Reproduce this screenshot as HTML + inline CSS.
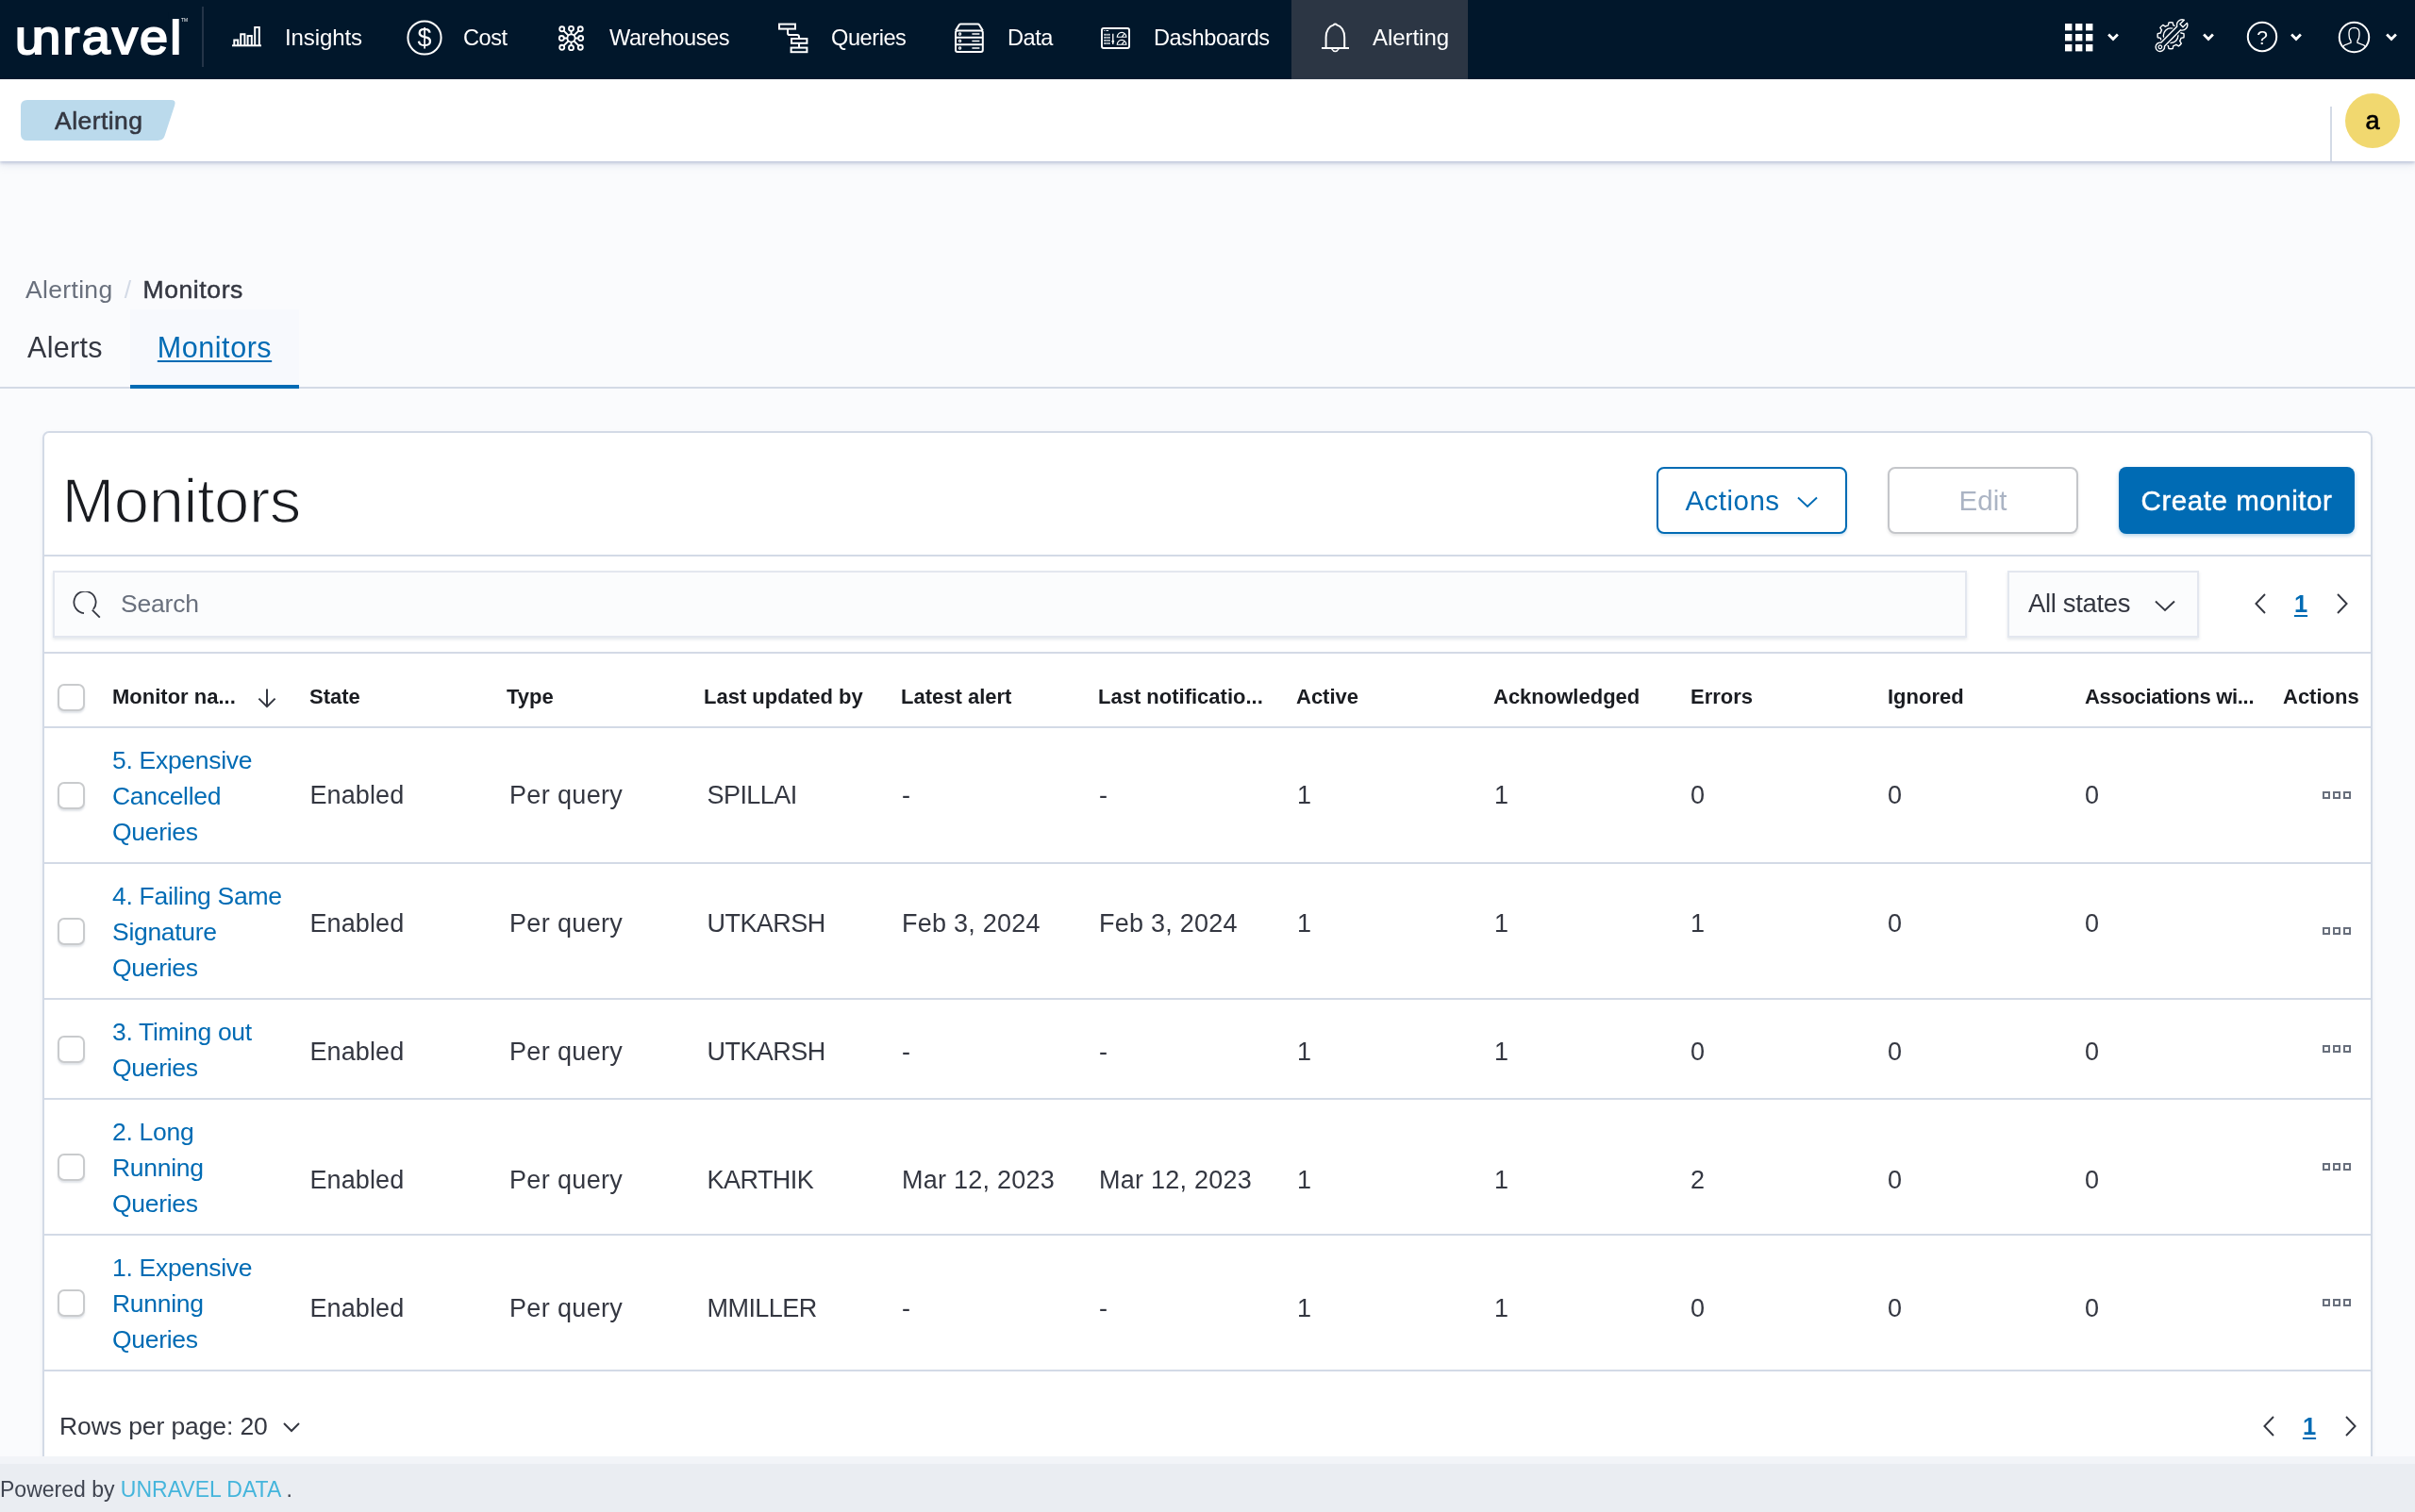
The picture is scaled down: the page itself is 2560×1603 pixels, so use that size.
<!DOCTYPE html>
<html lang="en">
<head>
<meta charset="utf-8">
<title>Unravel - Alerting - Monitors</title>
<style>
*{box-sizing:border-box;margin:0;padding:0}
html,body{width:2560px;height:1603px;overflow:hidden;background:#fafbfd;font-family:"Liberation Sans",sans-serif;color:#343741}
a{text-decoration:none;color:inherit}
.abs{position:absolute}
#app{will-change:transform;position:relative;width:2560px;height:1603px;overflow:hidden;background:#fafbfd}

/* top nav */
#nav{position:absolute;left:0;top:0;width:2560px;height:84px;background:#01172b;color:#fff}
#logo{position:absolute;left:16.2px;top:4.7px;font-size:51.5px;line-height:68px;font-weight:400;letter-spacing:2.1px;color:#fff;-webkit-text-stroke:1.9px #fff;transform:scaleX(1.048);transform-origin:0 0;white-space:nowrap}
#logo::first-letter{margin-right:-13.3px}
#logo i{position:absolute;left:155px;top:8px;width:14px;height:7.6px;background:#01172b}
#logo sup{position:absolute;left:168px;top:14px;font-size:4.6px;line-height:5px;letter-spacing:0;font-weight:400;-webkit-text-stroke:0}
#nav .sep{position:absolute;left:214px;top:7px;width:2px;height:64px;background:#243447}
.ni{position:absolute;top:0;height:84px}
.ni.active{background:#2c3644}
.ni span{position:absolute;top:25px;font-size:23.6px;line-height:30px;white-space:nowrap;color:#fff;letter-spacing:-.45px}
.ni svg{position:absolute;overflow:visible}
.ico{fill:none;stroke:#fff;stroke-width:2}
.chev{position:absolute;top:34px;width:16px;height:12px}

/* sub header */
#sub{position:absolute;left:0;top:84px;width:2560px;height:87px;background:#fff;box-shadow:0 2px 3px rgba(150,162,195,.5),0 5px 8px rgba(152,162,190,.16)}
#chip{position:absolute;left:22px;top:22px;width:165px;height:43px}
#chip span{position:absolute;left:36px;top:5.5px;font-size:26.5px;line-height:32px;color:#343741;letter-spacing:.45px;-webkit-text-stroke:.55px #343741}
#sub .vsep{position:absolute;left:2470px;top:29px;width:2px;height:58px;background:#d3dae6}
#avatar{position:absolute;left:2486px;top:15px;width:58px;height:58px;border-radius:50%;background:#f1d86f;color:#000;font-size:27px;line-height:58.5px;text-align:center;-webkit-text-stroke:.6px #000}

/* breadcrumbs + tabs */
#crumbs{position:absolute;left:27px;top:290px;font-size:26.5px;line-height:34px;white-space:nowrap;color:#69707d;letter-spacing:.33px}
#crumbs .slash{display:inline-block;width:32px;text-align:center;color:#d3dae6}
#crumbs b{font-weight:400;color:#343741;-webkit-text-stroke:.5px #343741;letter-spacing:.6px}
#tabs{position:absolute;left:0;top:328px;width:2560px;height:84px;border-bottom:2px solid #d3dae6}
#tabs .tab{position:absolute;top:0;height:84px;font-size:30.5px;line-height:40px;padding-top:20px;color:#343741;letter-spacing:.3px}
#tabs .tab.sel{left:138px;width:179px;background:#f7f9fd;color:#006bb4;border-bottom:4px solid #006bb4;height:84px;text-align:center}
#tabs .tab.sel span{text-decoration:underline;text-decoration-thickness:2px;text-underline-offset:2.5px;letter-spacing:.55px}

/* panel */
#panel{position:absolute;left:45px;top:457px;width:2470px;height:1120px;background:#fff;border:2px solid #d3dae6;border-radius:7px;box-shadow:0 2px 4px rgba(152,162,179,.15)}
.hl{position:absolute;left:0;width:2466px;height:2px;background:#d3dae6}


/* panel content (page coordinates) */
#pc{position:absolute;left:0;top:0;width:2560px;height:1544px;overflow:hidden}
#pc .hl{left:47px}
#ttl{position:absolute;left:65.5px;top:491px;font-size:67px;line-height:80px;font-weight:400;letter-spacing:-.45px;color:#1a1c21;-webkit-text-stroke:1.5px #fff;white-space:nowrap}
.btn{position:absolute;top:495px;height:71px;border-radius:8px;font-size:29.5px;line-height:36px;white-space:nowrap;display:flex;align-items:center;justify-content:center}
.b-act{border:2px solid #006bb4;color:#006bb4;background:#fff;box-shadow:0 2px 3px rgba(0,107,180,.18)}
.b-act span{letter-spacing:.5px}
.b-act svg{margin-left:17px;margin-top:3px}
.b-edit{border:2px solid #c4c6ca;color:#abb4c4;background:#fff;box-shadow:0 2px 3px rgba(100,100,100,.15)}
.b-create{background:#006bb4;color:#fff;box-shadow:0 2px 4px rgba(0,107,180,.3)}
.b-create span{-webkit-text-stroke:.5px #fff;letter-spacing:.55px}
#search{position:absolute;left:56px;top:605px;width:2029px;height:71px;background:#fbfcfd;border:2px solid #e3e7ef;box-shadow:0 2px 3px rgba(152,162,179,.25)}
#search svg{position:absolute;left:18px;top:20px}
#search span{position:absolute;left:70px;top:16px;font-size:26.5px;line-height:34px;color:#69707d;letter-spacing:-.2px}
#states{position:absolute;left:2128px;top:605px;width:203px;height:71px;background:#fbfcfd;border:2px solid #e3e7ef;box-shadow:0 2px 3px rgba(152,162,179,.25)}
#states span{position:absolute;left:20px;top:16px;font-size:27.5px;line-height:34px;color:#343741;white-space:nowrap;letter-spacing:-.35px}
#states svg{position:absolute;left:152.5px;top:28px}
.pag{position:absolute;left:2389px;width:102px;height:24px}
.pag svg{position:absolute;top:0}
.pag b{position:absolute;left:37px;top:-5px;width:26px;text-align:center;font-size:25.5px;line-height:34px;color:#006bb4;text-decoration:underline;text-decoration-thickness:2px;text-underline-offset:3px}
#pg2{left:2398px}
.cb{position:absolute;left:61px;width:29px;height:29px;border:2px solid #c9cbcd;border-radius:7px;background:#fff;box-shadow:0 2px 2px rgba(152,162,179,.3)}
.th{position:absolute;top:722.3px;font-size:22px;line-height:34px;font-weight:700;color:#1a1c21;white-space:nowrap}
.nm{position:absolute;left:119px;font-size:26.5px;line-height:38px;color:#006bb4;white-space:nowrap;letter-spacing:-.3px}
.td{position:absolute;font-size:27px;line-height:38px;color:#343741;white-space:nowrap}
.dots{position:absolute;left:2462px;width:30px;height:8px}
.dots i{position:absolute;top:0;width:8px;height:8px;border:2px solid #69707d}
.dots i:nth-child(2){left:11px}.dots i:nth-child(3){left:22px}
#rpp{position:absolute;left:63px;top:1495px;font-size:26.5px;line-height:34px;color:#343741;white-space:nowrap;letter-spacing:-.1px}
#rpp svg{margin-left:15px;position:relative;top:-2px}

/* footer */
#footer{position:absolute;left:0;top:1544px;width:2560px;height:59px;background:#eaedf2;border-top:8px solid #f2f4f8;font-size:23px;line-height:30px;color:#3f4450;padding:11.5px 0 0 0;white-space:nowrap}
#footer a{color:#45b5dc}
</style>
</head>
<body>
<div id="app">

<!-- ===== TOP NAV ===== -->
<div id="nav">
  <div id="logo">unravel<i></i><sup>TM</sup></div>
  <div class="sep"></div>
  <!-- Insights -->
  <div class="ni" style="left:216px;width:188px">
    <svg style="left:30px;top:27px" width="32" height="24" viewBox="0 0 32 24"><g class="ico" stroke-width="1.7">
      <path d="M0 21.3H31"/><path d="M2.3 21V15.4H6.2V21"/><path d="M9.2 21V9.2H13.4V21"/><path d="M16.6 21V11H20.8V21"/><path d="M24.2 21V2H28.8V21"/></g></svg>
    <span style="left:86px;font-size:24px;letter-spacing:-.1px">Insights</span>
  </div>
  <!-- Cost -->
  <div class="ni" style="left:404px;width:158px">
    <svg style="left:27px;top:21px" width="38" height="38" viewBox="0 0 38 38"><circle class="ico" cx="19" cy="19" r="17.6" stroke-width="1.8"/>
      <text x="19" y="28.2" text-anchor="middle" font-family="Liberation Sans, sans-serif" font-size="27" fill="#fff">$</text></svg>
    <span style="left:87px">Cost</span>
  </div>
  <!-- Warehouses -->
  <div class="ni" style="left:562px;width:234px">
    <svg style="left:29.5px;top:27px" width="27" height="27" viewBox="0 0 29 29"><g class="ico" stroke-width="1.6">
      <circle cx="14.5" cy="14.5" r="4.4"/>
      <circle cx="4" cy="4" r="2.7"/><circle cx="14.5" cy="3.6" r="2.7"/><circle cx="25" cy="4" r="2.7"/>
      <circle cx="3.6" cy="14.5" r="2.7"/><circle cx="25.4" cy="14.5" r="2.7"/>
      <circle cx="4" cy="25" r="2.7"/><circle cx="14.5" cy="25.4" r="2.7"/><circle cx="25" cy="25" r="2.7"/>
      <path d="M6 6L11.3 11.3M23 6L17.7 11.3M6 23L11.3 17.7M23 23L17.7 17.7M14.5 6.3V10.1M14.5 18.9V22.7M6.3 14.5H10.1M18.9 14.5H22.7"/></g></svg>
    <span style="left:84px">Warehouses</span>
  </div>
  <!-- Queries -->
  <div class="ni" style="left:796px;width:187px">
    <svg style="left:29px;top:24px" width="32" height="33" viewBox="0 0 32 33"><g class="ico" stroke-width="1.7">
      <rect x="1" y="1.6" width="17" height="5"/><path d="M10 6.6V11.2Q10 13 12 13H20Q22 13 22 15V17"/>
      <rect x="14" y="17" width="16.4" height="4.8"/><path d="M22 21.8V26.6"/><rect x="13.6" y="26.6" width="16.8" height="4.6"/></g></svg>
    <span style="left:85px">Queries</span>
  </div>
  <!-- Data -->
  <div class="ni" style="left:983px;width:155px">
    <svg style="left:28px;top:24px" width="33" height="33" viewBox="0 0 33 33"><g class="ico" stroke-width="1.7">
      <path d="M2 8.4L5.6 2.6Q6.2 1.6 7.4 1.6H25.4Q26.6 1.6 27.2 2.6L30.8 8.4"/>
      <rect x="2" y="8.4" width="28.8" height="22.6" rx="2"/><path d="M2 15.7H30.8M2 23.2H30.8"/>
      <path d="M19.4 12H27.4M19.4 19.4H27.4M19.4 27H27.4" stroke-width="1.5"/>
      <circle cx="6.6" cy="12" r="1.1" stroke-width="1.2"/><circle cx="6.6" cy="19.4" r="1.1" stroke-width="1.2"/><circle cx="6.6" cy="27" r="1.1" stroke-width="1.2"/></g></svg>
    <span style="left:85px">Data</span>
  </div>
  <!-- Dashboards -->
  <div class="ni" style="left:1138px;width:231px">
    <svg style="left:28.5px;top:29px" width="31" height="23.3" viewBox="0 0 32 24"><g class="ico" stroke-width="1.6">
      <rect x="1" y="1" width="30" height="21.6" rx="2"/>
      <path d="M13.2 7V18.6" stroke-width="1.4"/><circle cx="13.2" cy="15.4" r="1" fill="#fff" stroke-width="1"/>
      <path d="M17.8 10.6A5 5 0 0 1 27.8 10.6ZM22.8 10.6L25.4 7.4" stroke-width="1.2"/>
      <path d="M17.8 18.8A5 5 0 0 1 27.8 18.8ZM22.8 18.8L25.4 15.6" stroke-width="1.2"/>
      <path d="M3.4 3.6H4.4M5.6 3.6H8.4" stroke-width="1"/></g>
      <g fill="#fff"><rect x="3.6" y="7" width="1.6" height="1.9"/><rect x="5.9" y="7" width="1.6" height="1.9"/><rect x="8.2" y="7" width="1.6" height="1.9"/>
      <rect x="3.6" y="10.2" width="1.6" height="1.9"/><rect x="5.9" y="10.2" width="1.6" height="1.9"/><rect x="8.2" y="10.2" width="1.6" height="1.9"/>
      <rect x="3.6" y="13.4" width="1.6" height="1.9"/><rect x="5.9" y="13.4" width="1.6" height="1.9"/><rect x="8.2" y="13.4" width="1.6" height="1.9"/>
      <rect x="3.6" y="16.6" width="1.6" height="1.9"/><rect x="5.9" y="16.6" width="1.6" height="1.9"/><rect x="8.2" y="16.6" width="1.6" height="1.9"/></g></svg>
    <span style="left:85px">Dashboards</span>
  </div>
  <!-- Alerting (active) -->
  <div class="ni active" style="left:1369px;width:187px">
    <svg style="left:31px;top:24px" width="31" height="33" viewBox="0 0 31 33"><g class="ico" stroke-width="1.8">
      <path d="M1 27H30"/><path d="M5.6 27V15.5C5.6 8.6 9.2 3.6 13.4 2.6Q15.4 0.4 17.4 2.6C21.6 3.6 25.2 8.6 25.2 15.5V27"/>
      <path d="M11.6 27.6Q15.4 33.6 19.2 27.6" stroke-width="1.5"/></g></svg>
    <span style="left:86px;font-size:24px;letter-spacing:-.05px">Alerting</span>
  </div>

  <!-- right side icons -->
  <svg class="abs" style="left:2189px;top:25px" width="30" height="30" viewBox="0 0 30 30"><g fill="#fff">
    <rect x="0" y="0" width="7.4" height="7.4"/><rect x="11" y="0" width="7.4" height="7.4"/><rect x="22" y="0" width="7.4" height="7.4"/>
    <rect x="0" y="11" width="7.4" height="7.4"/><rect x="11" y="11" width="7.4" height="7.4"/><rect x="22" y="11" width="7.4" height="7.4"/>
    <rect x="0" y="22" width="7.4" height="7.4"/><rect x="11" y="22" width="7.4" height="7.4"/><rect x="22" y="22" width="7.4" height="7.4"/></g></svg>
  <svg class="chev" style="left:2232px" viewBox="0 0 16 12"><path d="M3.1 2.6L8 7.5L12.9 2.6" fill="none" stroke="#fff" stroke-width="2.8"/></svg>

  <svg class="abs" style="left:2284px;top:18.5px" width="37" height="37" viewBox="0 0 37 37"><g fill="none" stroke="#fff" stroke-width="1.4" stroke-linejoin="round"><path d="M27.97 15.99L30.95 16.63A14.0 14.0 0 0 1 30.95 20.77L27.97 21.41A11.2 11.2 0 0 1 26.70 24.47L28.35 27.03A14.0 14.0 0 0 1 25.43 29.95L22.87 28.30A11.2 11.2 0 0 1 19.81 29.57L19.17 32.55A14.0 14.0 0 0 1 15.03 32.55L14.39 29.57A11.2 11.2 0 0 1 11.33 28.30L8.77 29.95A14.0 14.0 0 0 1 5.85 27.03L7.50 24.47A11.2 11.2 0 0 1 6.23 21.41L3.25 20.77A14.0 14.0 0 0 1 3.25 16.63L6.23 15.99A11.2 11.2 0 0 1 7.50 12.93L5.85 10.37A14.0 14.0 0 0 1 8.77 7.45L11.33 9.10A11.2 11.2 0 0 1 14.39 7.83L15.03 4.85A14.0 14.0 0 0 1 19.17 4.85L19.81 7.83A11.2 11.2 0 0 1 22.87 9.10L25.43 7.45A14.0 14.0 0 0 1 28.35 10.37L26.70 12.93A11.2 11.2 0 0 1 27.97 15.99Z"/><circle cx="17.10" cy="18.70" r="7.8"/><g transform="translate(5.84 30.8) rotate(-45)"><path d="M3.88 -2.65L28.07 -2.65A5.6 5.6 0 0 1 38.15 -2.2L32 -2.2L32 2.2L38.15 2.2A5.6 5.6 0 0 1 28.07 2.65L3.88 2.65A4.7 4.7 0 1 1 3.88 -2.65Z" fill="#01172b" stroke="#01172b" stroke-width="3.6"/><path d="M3.88 -2.65L28.07 -2.65A5.6 5.6 0 0 1 38.15 -2.2L32 -2.2L32 2.2L38.15 2.2A5.6 5.6 0 0 1 28.07 2.65L3.88 2.65A4.7 4.7 0 1 1 3.88 -2.65Z" fill="#01172b"/><circle cx="0" cy="0" r="1.8" stroke-width="1.2"/></g></g></svg>
  <svg class="chev" style="left:2333px" viewBox="0 0 16 12"><path d="M3.1 2.6L8 7.5L12.9 2.6" fill="none" stroke="#fff" stroke-width="2.8"/></svg>

  <svg class="abs" style="left:2381px;top:22px" width="34" height="34" viewBox="0 0 34 34"><circle class="ico" cx="17" cy="17" r="15.2" stroke-width="1.7"/>
    <text x="17" y="24.6" text-anchor="middle" font-family="Liberation Sans, sans-serif" font-size="21" fill="#fff">?</text></svg>
  <svg class="chev" style="left:2426px" viewBox="0 0 16 12"><path d="M3.1 2.6L8 7.5L12.9 2.6" fill="none" stroke="#fff" stroke-width="2.8"/></svg>

  <svg class="abs" style="left:2477.7px;top:22px" width="35" height="35" viewBox="0 0 36 36"><g class="ico" stroke-width="1.7">
    <circle cx="18" cy="18" r="16.2"/>
    <path d="M5.6 28.6Q6.6 26.6 10.2 25.6L14.4 24V21.8Q12.4 19.8 12.4 15.8V12.8Q12.6 7.8 18 7.6Q23.4 7.8 23.6 12.8V15.8Q23.6 19.8 21.6 21.8V24L25.8 25.6Q29.4 26.6 30.4 28.6" stroke-width="1.4"/></g></svg>
  <svg class="chev" style="left:2527px" viewBox="0 0 16 12"><path d="M3.1 2.6L8 7.5L12.9 2.6" fill="none" stroke="#fff" stroke-width="2.8"/></svg>
</div>

<!-- ===== SUB HEADER ===== -->
<div id="sub">
  <div id="chip">
    <svg width="165" height="43" viewBox="0 0 166 44" preserveAspectRatio="none"><path d="M7 0H160Q166 0 164.2 5.5L153.5 39Q152 44 146 44H7Q0 44 0 37V7Q0 0 7 0Z" fill="#bbdaec"/></svg>
    <span>Alerting</span>
  </div>
  <div class="vsep"></div>
  <div id="avatar">a</div>
</div>

<!-- ===== BREADCRUMBS / TABS ===== -->
<div id="crumbs">Alerting<span class="slash">/</span><b>Monitors</b></div>
<div id="tabs">
  <div class="tab" style="left:29px">Alerts</div>
  <div class="tab sel"><span>Monitors</span></div>
</div>

<!-- ===== PANEL ===== -->
<div id="panel"></div>
<!--PC-START-->
<div id="pc">
<h1 id="ttl">Monitors</h1>
<div class="btn b-act" style="left:1756px;width:202px"><span>Actions</span><svg width="24" height="14" viewBox="0 0 24 14"><path d="M2 2.5L12 12L22 2.5" fill="none" stroke="#006bb4" stroke-width="1.9"/></svg></div>
<div class="btn b-edit" style="left:2001px;width:202px"><span>Edit</span></div>
<div class="btn b-create" style="left:2246px;width:250px"><span>Create monitor</span></div>
<div class="hl" style="top:588px"></div>
<div id="search"><svg width="32" height="32" viewBox="0 0 32 32"><g fill="none" stroke="#343741" stroke-width="1.8"><path d="M13 23.06A11.6 11.6 0 1 1 22.9 18.96"/><path d="M21.75 19.6L29.8 27.7"/></g></svg><span>Search</span></div>
<div id="states"><span>All states</span><svg width="24" height="14" viewBox="0 0 24 14"><path d="M2 2.5L12 12L22 2.5" fill="none" stroke="#343741" stroke-width="1.9"/></svg></div>
<div class="pag" id="pg1" style="top:628px"><svg style="left:0" width="14" height="24" viewBox="0 0 14 24"><path d="M12 2L2.4 12L12 22" fill="none" stroke="#343741" stroke-width="1.9"/></svg><b>1</b><svg style="left:87px" width="14" height="24" viewBox="0 0 14 24"><path d="M2 2L11.6 12L2 22" fill="none" stroke="#343741" stroke-width="1.9"/></svg></div>
<div class="hl" style="top:691px"></div>
<div class="cb" style="top:725px"></div>
<div class="th" style="left:119px">Monitor na...</div>
<div class="th" style="left:328px">State</div>
<div class="th" style="left:537px">Type</div>
<div class="th" style="left:746px">Last updated by</div>
<div class="th" style="left:955px">Latest alert</div>
<div class="th" style="left:1164px">Last notificatio...</div>
<div class="th" style="left:1374px">Active</div>
<div class="th" style="left:1583px">Acknowledged</div>
<div class="th" style="left:1792px">Errors</div>
<div class="th" style="left:2001px">Ignored</div>
<div class="th" style="left:2210px;letter-spacing:-.3px">Associations wi...</div>
<div class="th" style="left:2420px">Actions</div>
<svg class="abs" style="left:271px;top:727.5px" width="24" height="24" viewBox="0 0 24 24"><path d="M12 2.5V21M3.4 12.6L12 21.2L20.6 12.6" fill="none" stroke="#343741" stroke-width="2"/></svg>
<div class="hl" style="top:770px"></div>
<div class="cb" style="top:829px"></div>
<a class="nm" style="top:786.5px">5. Expensive <br>Cancelled <br>Queries</a>
<div class="td" style="left:328.5px;top:824px;letter-spacing:0.1px">Enabled</div>
<div class="td" style="left:540px;top:824px;letter-spacing:0.35px">Per query</div>
<div class="td" style="left:749.5px;top:824px;letter-spacing:-0.55px">SPILLAI</div>
<div class="td" style="left:956px;top:824px;letter-spacing:0.25px">-</div>
<div class="td" style="left:1165px;top:824px;letter-spacing:0.25px">-</div>
<div class="td" style="left:1375px;top:824px">1</div>
<div class="td" style="left:1584px;top:824px">1</div>
<div class="td" style="left:1792px;top:824px">0</div>
<div class="td" style="left:2001px;top:824px">0</div>
<div class="td" style="left:2210px;top:824px">0</div>
<div class="dots" style="top:839px"><i></i><i></i><i></i></div>
<div class="hl" style="top:914px"></div>
<div class="cb" style="top:973px"></div>
<a class="nm" style="top:930.5px">4. Failing Same <br>Signature <br>Queries</a>
<div class="td" style="left:328.5px;top:960px;letter-spacing:0.1px">Enabled</div>
<div class="td" style="left:540px;top:960px;letter-spacing:0.35px">Per query</div>
<div class="td" style="left:749.5px;top:960px;letter-spacing:-0.55px">UTKARSH</div>
<div class="td" style="left:956px;top:960px;letter-spacing:0.25px">Feb 3, 2024</div>
<div class="td" style="left:1165px;top:960px;letter-spacing:0.25px">Feb 3, 2024</div>
<div class="td" style="left:1375px;top:960px">1</div>
<div class="td" style="left:1584px;top:960px">1</div>
<div class="td" style="left:1792px;top:960px">1</div>
<div class="td" style="left:2001px;top:960px">0</div>
<div class="td" style="left:2210px;top:960px">0</div>
<div class="dots" style="top:983px"><i></i><i></i><i></i></div>
<div class="hl" style="top:1058px"></div>
<div class="cb" style="top:1098px"></div>
<a class="nm" style="top:1074.5px">3. Timing out <br>Queries</a>
<div class="td" style="left:328.5px;top:1096px;letter-spacing:0.1px">Enabled</div>
<div class="td" style="left:540px;top:1096px;letter-spacing:0.35px">Per query</div>
<div class="td" style="left:749.5px;top:1096px;letter-spacing:-0.55px">UTKARSH</div>
<div class="td" style="left:956px;top:1096px;letter-spacing:0.25px">-</div>
<div class="td" style="left:1165px;top:1096px;letter-spacing:0.25px">-</div>
<div class="td" style="left:1375px;top:1096px">1</div>
<div class="td" style="left:1584px;top:1096px">1</div>
<div class="td" style="left:1792px;top:1096px">0</div>
<div class="td" style="left:2001px;top:1096px">0</div>
<div class="td" style="left:2210px;top:1096px">0</div>
<div class="dots" style="top:1108px"><i></i><i></i><i></i></div>
<div class="hl" style="top:1164px"></div>
<div class="cb" style="top:1223px"></div>
<a class="nm" style="top:1180.5px">2. Long <br>Running <br>Queries</a>
<div class="td" style="left:328.5px;top:1232px;letter-spacing:0.1px">Enabled</div>
<div class="td" style="left:540px;top:1232px;letter-spacing:0.35px">Per query</div>
<div class="td" style="left:749.5px;top:1232px;letter-spacing:-0.55px">KARTHIK</div>
<div class="td" style="left:956px;top:1232px;letter-spacing:0.25px">Mar 12, 2023</div>
<div class="td" style="left:1165px;top:1232px;letter-spacing:0.25px">Mar 12, 2023</div>
<div class="td" style="left:1375px;top:1232px">1</div>
<div class="td" style="left:1584px;top:1232px">1</div>
<div class="td" style="left:1792px;top:1232px">2</div>
<div class="td" style="left:2001px;top:1232px">0</div>
<div class="td" style="left:2210px;top:1232px">0</div>
<div class="dots" style="top:1233px"><i></i><i></i><i></i></div>
<div class="hl" style="top:1308px"></div>
<div class="cb" style="top:1367px"></div>
<a class="nm" style="top:1324.5px">1. Expensive <br>Running <br>Queries</a>
<div class="td" style="left:328.5px;top:1368px;letter-spacing:0.1px">Enabled</div>
<div class="td" style="left:540px;top:1368px;letter-spacing:0.35px">Per query</div>
<div class="td" style="left:749.5px;top:1368px;letter-spacing:-0.55px">MMILLER</div>
<div class="td" style="left:956px;top:1368px;letter-spacing:0.25px">-</div>
<div class="td" style="left:1165px;top:1368px;letter-spacing:0.25px">-</div>
<div class="td" style="left:1375px;top:1368px">1</div>
<div class="td" style="left:1584px;top:1368px">1</div>
<div class="td" style="left:1792px;top:1368px">0</div>
<div class="td" style="left:2001px;top:1368px">0</div>
<div class="td" style="left:2210px;top:1368px">0</div>
<div class="dots" style="top:1377px"><i></i><i></i><i></i></div>
<div class="hl" style="top:1452px"></div>
<div id="rpp"><span>Rows per page: 20</span><svg width="20" height="12" viewBox="0 0 20 12"><path d="M2 2L10 10L18 2" fill="none" stroke="#343741" stroke-width="2"/></svg></div>
<div class="pag" id="pg2" style="top:1500px"><svg style="left:0" width="14" height="24" viewBox="0 0 14 24"><path d="M12 2L2.4 12L12 22" fill="none" stroke="#343741" stroke-width="1.9"/></svg><b>1</b><svg style="left:87px" width="14" height="24" viewBox="0 0 14 24"><path d="M2 2L11.6 12L2 22" fill="none" stroke="#343741" stroke-width="1.9"/></svg></div>
</div>
<!--PC-END-->

<!-- ===== FOOTER ===== -->
<div id="footer">Powered by <a>UNRAVEL DATA</a> .</div>

</div>
</body>
</html>
